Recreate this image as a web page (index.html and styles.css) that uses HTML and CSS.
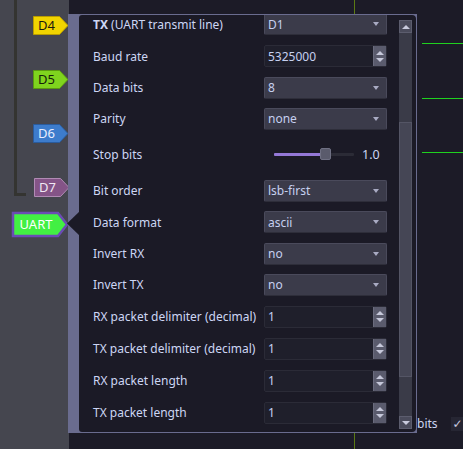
FILE: index.html
```html
<!DOCTYPE html>
<html>
<head>
<meta charset="utf-8">
<link rel="stylesheet" href="styles.css">
</head>
<body>
<div class="app">
  <div class="sidebar">
    <div class="wire"></div>
    <div class="tag tag-d4"><svg class="tag-shape" viewBox="0 0 36 19"><polygon points="0.5,0.5 26.5,0.5 35,9.5 26.5,18.5 0.5,18.5"/></svg><span class="tag-text">D4</span></div>
    <div class="tag tag-d5"><svg class="tag-shape" viewBox="0 0 36 19"><polygon points="0.5,0.5 26.5,0.5 35,9.5 26.5,18.5 0.5,18.5"/></svg><span class="tag-text">D5</span></div>
    <div class="tag tag-d6"><svg class="tag-shape" viewBox="0 0 36 19"><polygon points="0.5,0.5 26.5,0.5 35,9.5 26.5,18.5 0.5,18.5"/></svg><span class="tag-text">D6</span></div>
    <div class="tag tag-d7"><svg class="tag-shape" viewBox="0 0 36 19"><polygon points="0.5,0.5 26.5,0.5 35,9.5 26.5,18.5 0.5,18.5"/></svg><span class="tag-text">D7</span></div>
    <div class="tag tag-uart"><svg class="tag-shape" viewBox="0 0 56 25"><polygon points="1,1 46,1 55,12.5 46,24 1,24"/></svg><span class="tag-text">UART</span></div>
  </div>
  <div class="canvas">
    <div class="cursor-line"></div>
    <div class="trace trace-1"></div>
    <div class="trace trace-2"></div>
    <div class="trace trace-3"></div>
    <div class="peek"><span class="peek-text">bits</span><span class="peek-check">✓</span></div>
  </div>

  <div class="popup">
    <div class="pointer"></div>
    <div class="popup-body">
      <div class="scroll-view">
        <div class="form">
          <div class="row row-dd">
            <span class="label"><b>TX</b> (UART transmit line)</span>
            <div class="combo"><span>D1</span><i class="caret"></i></div>
          </div>
          <div class="row row-sb">
            <span class="label">Baud rate</span>
            <div class="spin"><span class="spin-value">5325000</span><div class="spin-btns"><i class="up"></i><i class="down"></i></div></div>
          </div>
          <div class="row row-dd">
            <span class="label">Data bits</span>
            <div class="combo"><span>8</span><i class="caret"></i></div>
          </div>
          <div class="row row-dd">
            <span class="label">Parity</span>
            <div class="combo"><span>none</span><i class="caret"></i></div>
          </div>
          <div class="row row-slider">
            <span class="label">Stop bits</span>
            <div class="slider-wrap">
              <div class="slider"><div class="slider-fill"></div><div class="slider-handle"></div></div>
              <span class="slider-value">1.0</span>
            </div>
          </div>
          <div class="row row-dd">
            <span class="label">Bit order</span>
            <div class="combo"><span>lsb-first</span><i class="caret"></i></div>
          </div>
          <div class="row row-dd">
            <span class="label">Data format</span>
            <div class="combo"><span>ascii</span><i class="caret"></i></div>
          </div>
          <div class="row row-dd">
            <span class="label">Invert RX</span>
            <div class="combo"><span>no</span><i class="caret"></i></div>
          </div>
          <div class="row row-dd">
            <span class="label">Invert TX</span>
            <div class="combo"><span>no</span><i class="caret"></i></div>
          </div>
          <div class="row row-sb">
            <span class="label">RX packet delimiter (decimal)</span>
            <div class="spin"><span class="spin-value">1</span><div class="spin-btns"><i class="up"></i><i class="down"></i></div></div>
          </div>
          <div class="row row-sb">
            <span class="label">TX packet delimiter (decimal)</span>
            <div class="spin"><span class="spin-value">1</span><div class="spin-btns"><i class="up"></i><i class="down"></i></div></div>
          </div>
          <div class="row row-sb">
            <span class="label">RX packet length</span>
            <div class="spin"><span class="spin-value">1</span><div class="spin-btns"><i class="up"></i><i class="down"></i></div></div>
          </div>
          <div class="row row-sb">
            <span class="label">TX packet length</span>
            <div class="spin"><span class="spin-value">1</span><div class="spin-btns"><i class="up"></i><i class="down"></i></div></div>
          </div>
        </div>
      </div>
      <div class="scrollbar">
        <div class="sb-btn"><i class="sb-up"></i></div>
        <div class="sb-track">
          <div class="sb-space-top"></div>
          <div class="sb-handle"></div>
          <div class="sb-space-bottom"></div>
        </div>
        <div class="sb-btn"><i class="sb-down"></i></div>
      </div>
    </div>
  </div>
</div>
</body>
</html>
```

FILE: styles.css
```css
* { box-sizing: border-box; }
html, body { margin: 0; padding: 0; }
body {
  width: 463px;
  height: 449px;
  overflow: hidden;
  background: #1c1b27;
  font-family: "Noto Sans", "DejaVu Sans", sans-serif;
  font-size: 12px;
  color: #cdd6f4;
}
.app {
  position: relative;
  width: 463px;
  height: 449px;
  display: grid;
  grid-template-columns: 69px 1fr;
}

/* ---------- left sidebar ---------- */
.sidebar {
  position: relative;
  background: #45464f;
}
.wire {
  position: absolute;
  left: 14px;
  top: 0;
  width: 12px;
  height: 196px;
  border-left: 3px solid #343431;
  border-bottom: 3px solid #343431;
}
.tag {
  position: absolute;
  left: 33px;
  width: 36px;
  height: 19px;
}
.tag-shape {
  position: absolute;
  left: 0;
  top: 0;
  width: 36px;
  height: 19px;
  overflow: visible;
}
.tag-shape polygon { stroke-width: 1; }
.tag-text {
  position: relative;
  display: block;
  width: 27px;
  line-height: 19px;
  text-align: center;
  font-size: 13px;
}
.tag-d4 { top: 16px; }
.tag-d4 polygon { fill: #f1d400; stroke: #b89c00; }
.tag-d4 .tag-text { color: #1a1a10; }
.tag-d5 { top: 70px; }
.tag-d5 polygon { fill: #7fd41e; stroke: #5a9a10; }
.tag-d5 .tag-text { color: #14200a; }
.tag-d6 { top: 124px; }
.tag-d6 polygon { fill: #3d7ccc; stroke: #2a5b9c; }
.tag-d6 .tag-text { color: #e8eeff; }
.tag-d7 { top: 178px; left: 34px; width: 35px; }
.tag-d7 polygon { fill: #845487; stroke: #b08ab4; }
.tag-d7 .tag-text { color: #f0e8f4; }
.tag-uart {
  top: 212px;
  left: 12px;
  width: 57px;
  height: 26px;
}
.tag-uart .tag-shape { width: 56px; height: 25px; }
.tag-uart polygon { fill: #42f043; stroke: #6b4cb4; stroke-width: 2.5; }
.tag-uart .tag-text {
  width: 48px;
  line-height: 25px;
  color: #ffffff;
  font-size: 13px;
}

/* ---------- right plot canvas ---------- */
.canvas {
  position: relative;
  background: #1c1b27;
}
.cursor-line {
  position: absolute;
  left: 285px;
  top: 0;
  width: 1px;
  height: 449px;
  background: #5b7a14;
}
.trace {
  position: absolute;
  left: 353px;
  right: 0;
  height: 1px;
  background: #1fd11f;
}
.trace-1 { top: 43px; }
.trace-2 { top: 98px; }
.trace-3 { top: 152px; }
.peek {
  position: absolute;
  left: 348px;
  top: 415px;
  display: flex;
  align-items: center;
  gap: 13px;
}
.peek-text { color: #cdd6f4; font-size: 12px; }
.peek-check {
  width: 14px;
  height: 14px;
  background: #262633;
  color: #c9cbe0;
  font-size: 12px;
  line-height: 14px;
  text-align: center;
}

/* ---------- popup ---------- */
.popup {
  position: absolute;
  left: 68px;
  top: 14px;
  width: 349px;
  height: 419px;
  background: #6a6c8f;
  padding: 1px 1px 1px 11px;
}
.pointer {
  position: absolute;
  left: -1px;
  top: 197px;
  width: 13px;
  height: 25px;
  background: #1b1a26;
  clip-path: polygon(0 50%, 100% 0, 100% 100%);
}
.popup-body {
  width: 100%;
  height: 100%;
  background: #1b1a26;
  display: flex;
  border-radius: 3px 4px 4px 3px;
}
.scroll-view {
  flex: 1;
  overflow: hidden;
}
.form {
  margin-top: -6.33px;
  padding-left: 14px;
  padding-right: 11px;
}
.row {
  display: grid;
  grid-template-columns: 171px 123px;
  align-items: center;
}
.row-dd { height: 31.33px; }
.row-sb { height: 32px; }
.row-slider { height: 40.67px; }
.label { white-space: nowrap; color: #cdd6f4; }
.label b { font-weight: 700; }

.combo {
  height: 22px;
  background: #3b3b4a;
  border: 1px solid #4a4a5b;
  border-bottom-color: #2e2e3a;
  border-radius: 2px;
  display: flex;
  align-items: center;
  justify-content: space-between;
  padding: 0 7px 0 3px;
  color: #c6d0f0;
}
.caret {
  width: 0;
  height: 0;
  border-left: 3.5px solid transparent;
  border-right: 3.5px solid transparent;
  border-top: 4px solid #a9abc3;
}

.spin {
  height: 22px;
  background: #1f1f2b;
  border: 1px solid #2b2b37;
  border-radius: 2px;
  display: flex;
  align-items: center;
  justify-content: space-between;
  color: #c6d0f0;
}
.spin-value { padding-left: 3px; }
.spin-btns {
  width: 13px;
  height: 100%;
  background: #5a5b6d;
  border-left: 1px solid #6a6b7d;
  display: flex;
  flex-direction: column;
  align-items: center;
  justify-content: center;
  gap: 3px;
}
.spin-btns .up, .spin-btns .down {
  width: 0;
  height: 0;
  border-left: 4px solid transparent;
  border-right: 4px solid transparent;
}
.spin-btns .up { border-bottom: 4px solid #c6c8da; }
.spin-btns .down { border-top: 4px solid #c6c8da; }

.slider-wrap {
  display: flex;
  align-items: center;
  padding-left: 10px;
  gap: 8px;
}
.slider {
  position: relative;
  width: 80px;
  height: 3px;
  background: #2b2b36;
  border-radius: 1px;
}
.slider-fill {
  width: 47px;
  height: 3px;
  background: #9478d6;
  border-radius: 1px;
}
.slider-handle {
  position: absolute;
  left: 46px;
  top: -5px;
  width: 11px;
  height: 12px;
  background: #5a5b6c;
  border: 1px solid #6f7083;
  border-radius: 2px;
}
.slider-value { color: #cdd6f4; font-size: 12.5px; }

/* ---------- scrollbar ---------- */
.scrollbar {
  width: 13px;
  margin: 5px 4px 3px 0;
  display: flex;
  flex-direction: column;
}
.sb-btn {
  height: 13px;
  background: #4a4b5b;
  border: 1px solid #5c5d6e;
  display: flex;
  align-items: center;
  justify-content: center;
}
.sb-up, .sb-down {
  width: 0;
  height: 0;
  border-left: 4px solid transparent;
  border-right: 4px solid transparent;
}
.sb-up { border-bottom: 4px solid #c8cadc; }
.sb-down { border-top: 4px solid #c8cadc; }
.sb-track {
  flex: 1;
  display: flex;
  flex-direction: column;
  background: #3a3b48;
}
.sb-space-top { height: 89px; }
.sb-handle {
  height: 255px;
  background: #454655;
  border: 1px solid #545565;
}
.sb-space-bottom { flex: 1; }
```
